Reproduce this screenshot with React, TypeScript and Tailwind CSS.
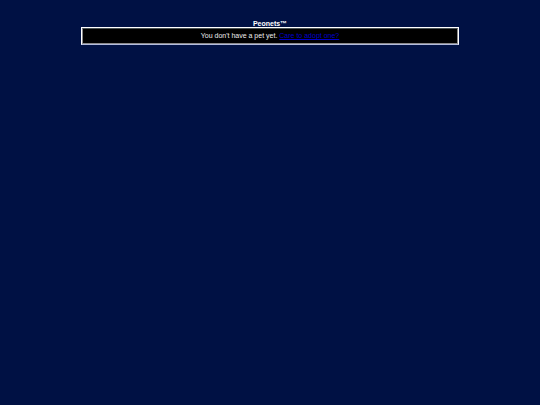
export default function App() {
  return (
    <main className="flex min-h-screen flex-col items-center bg-[#001144] pt-5 text-center font-['Liberation_Sans',Arial,sans-serif] text-[7px] leading-[7px] text-white">
      <h1 className="font-bold">Peonets™</h1>
      <section className="w-[70%] border border-white border-b-[#b4bcdc]">
        <p className="border border-[#8a8a8a] border-t-[#4a5355] bg-black pt-[3px] pb-1 text-[#eeeeee]">
          You don't have a pet yet.{" "}
          <a href="#adopt" className="text-[#0000cc] underline">
            Care to adopt one?
          </a>
        </p>
      </section>
    </main>
  );
}
